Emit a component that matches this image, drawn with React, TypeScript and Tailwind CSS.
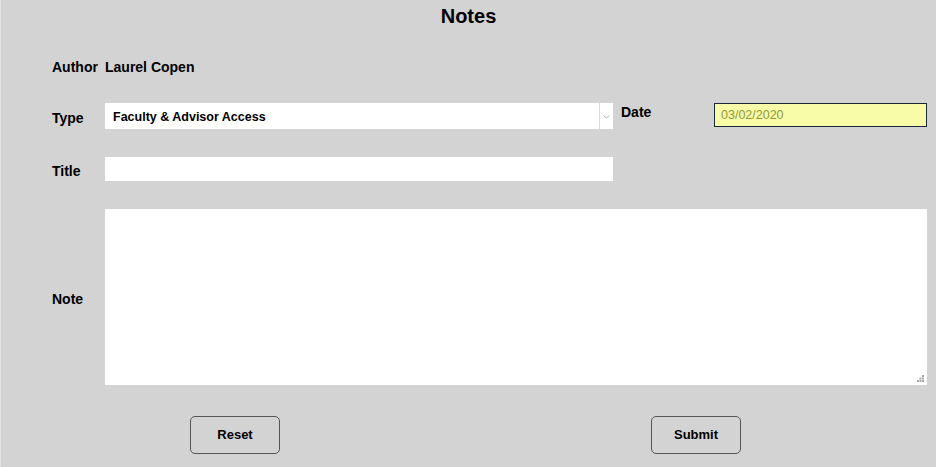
export default function App() {
  return (
    <div className="w-[936px] h-[467px] bg-[#d3d3d3] border-l border-[#e2e2e2] font-['Liberation_Sans',Arial,sans-serif] text-black overflow-hidden">
      <h1 className="h-[32px] pt-[4px] text-center text-[20px] font-bold leading-[24px]">Notes</h1>

      <div className="mt-[26px] flex items-center h-[18px] pl-[51px] text-[14px] font-bold">
        <span className="w-[53px]">Author</span>
        <span>Laurel Copen</span>
      </div>

      <div className="mt-[27px] flex items-start pl-[51px]">
        <span className="w-[53px] h-[26px] leading-[26px] relative top-[2px] text-[14px] font-bold">Type</span>
        <div className="w-[508px] h-[26px] bg-white flex items-center">
          <span className="flex-1 pl-[8px] relative top-[1px] text-[12.5px] font-bold">Faculty &amp; Advisor Access</span>
          <div className="w-[14px] h-full border-l border-[#dcdcdc] flex items-center justify-center">
            <svg width="7" height="4" viewBox="0 0 7 4" className="mt-[2px]">
              <path d="M0.5 0.5 L3.5 3 L6.5 0.5" fill="none" stroke="#b0b0b0" strokeWidth="1" />
            </svg>
          </div>
        </div>
        <span className="ml-[8px] w-[93px] pt-[1px] text-[14px] font-bold leading-[16px]">Date</span>
        <div className="w-[213px] h-[24px] bg-[#f8fca8] border border-[#1c2838] flex items-center pl-[6px] text-[12.5px] text-[#8f9938]">
          03/02/2020
        </div>
      </div>

      <div className="mt-[28px] flex items-center pl-[51px]">
        <span className="w-[53px] relative top-[2px] text-[14px] font-bold">Title</span>
        <div className="w-[508px] h-[24px] bg-white" />
      </div>

      <div className="mt-[28px] flex items-center pl-[51px]">
        <span className="w-[53px] relative top-[2px] text-[14px] font-bold">Note</span>
        <div className="relative w-[822px] h-[176px] bg-white">
          <svg width="7" height="7" viewBox="0 0 7 7" className="absolute right-[3px] bottom-[3px]">
            <rect x="5" y="0" width="2" height="2" fill="#a8a8a8" />
            <rect x="2.5" y="2.5" width="2" height="2" fill="#a8a8a8" />
            <rect x="5" y="2.5" width="2" height="2" fill="#a8a8a8" />
            <rect x="0" y="5" width="2" height="2" fill="#a8a8a8" />
            <rect x="2.5" y="5" width="2" height="2" fill="#a8a8a8" />
            <rect x="5" y="5" width="2" height="2" fill="#a8a8a8" />
          </svg>
        </div>
      </div>

      <div className="mt-[31px] flex pl-[189px]">
        <button className="w-[90px] h-[38px] rounded-[5px] border border-[#555555] text-[13px] font-bold">Reset</button>
        <button className="ml-[371px] w-[90px] h-[38px] rounded-[5px] border border-[#555555] text-[13px] font-bold">Submit</button>
      </div>
    </div>
  );
}
